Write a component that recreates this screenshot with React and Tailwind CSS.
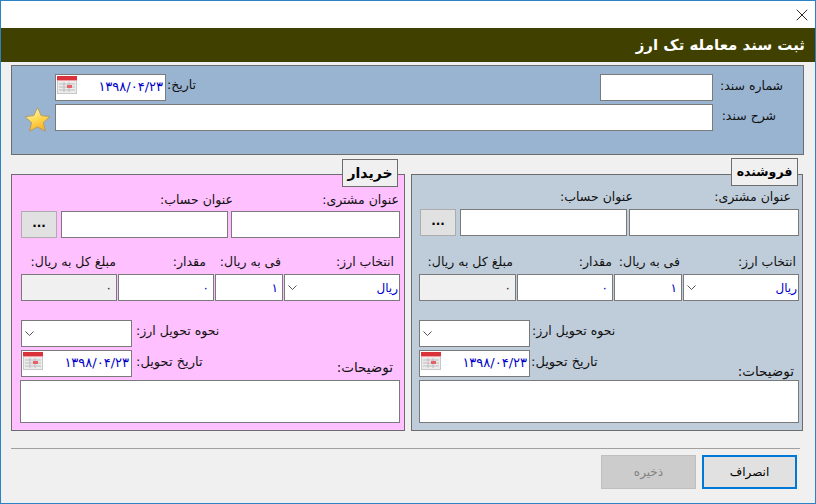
import { X } from 'lucide-react';

const boxClass = 'h-[27px] shrink-0 border border-[#7a7a7a] bg-white';

function Label({ children, className = '' }) {
  return (
    <span dir="rtl" className={`whitespace-nowrap text-[12.5px] leading-[16px] text-[#111] ${className}`}>
      {children}
    </span>
  );
}

function CalendarIcon() {
  return (
    <svg width="20" height="18" viewBox="0 0 20 18" className="shrink-0">
      <rect x="0.5" y="0.5" width="19" height="17" fill="#ececec" stroke="#c8c8c8" />
      <rect x="0" y="0" width="20" height="4" fill="#d9323a" />
      <rect x="0" y="4" width="20" height="1" fill="#f0a0a0" />
      <path d="M2 8h16M2 11h16M2 14h16M7 6v10M12 6v10" stroke="#bdbdbd" strokeWidth="1" fill="none" />
      <rect x="10" y="9" width="5" height="3" fill="#e8606a" />
    </svg>
  );
}

function StarIcon() {
  return (
    <svg width="27" height="27" viewBox="0 0 27 27">
      <defs>
        <linearGradient id="starFill" x1="0.3" y1="0" x2="0.7" y2="1">
          <stop offset="0" stopColor="#fff8c0" />
          <stop offset="0.5" stopColor="#fed84f" />
          <stop offset="1" stopColor="#f7a823" />
        </linearGradient>
      </defs>
      <path
        d="M13.5 1.5 L17.2 9.6 L26 10.6 L19.5 16.6 L21.3 25.3 L13.5 20.9 L5.7 25.3 L7.5 16.6 L1 10.6 L9.8 9.6 Z"
        fill="url(#starFill)"
        stroke="#b39a6a"
        strokeWidth="1"
        strokeLinejoin="round"
      />
    </svg>
  );
}

function DateBox({ width }) {
  return (
    <div className={`${boxClass} ${width} flex items-start justify-between pl-[1px] pr-[2px] pt-[1px]`}>
      <CalendarIcon />
      <span className="pt-[3px] text-[13px] leading-[16px] text-[#0000c8]">۱۳۹۸/۰۴/۲۳</span>
    </div>
  );
}

function Combo({ width, value }) {
  return (
    <div className={`${boxClass} ${width} flex items-center justify-between pl-[3px]`}>
      <svg width="9" height="5" viewBox="0 0 9 5" className="shrink-0">
        <path d="M0.5 0.5 L4.5 4.5 L8.5 0.5" fill="none" stroke="#555" strokeWidth="1" />
      </svg>
      {value && <span className="pr-[1px] text-[12px] text-[#0000c8]">{value}</span>}
    </div>
  );
}

function NumberBox({ width, value, disabled }) {
  return (
    <div
      className={`h-[27px] shrink-0 border border-[#7a7a7a] ${width} flex items-center justify-end pr-[4px] text-[12px] ${
        disabled ? 'bg-[#f0f0f0] text-[#222]' : 'bg-white text-[#0000c8]'
      }`}
    >
      {value}
    </div>
  );
}

function Party({ c }) {
  return (
    <div className={`relative h-[257px] shrink-0 border border-[#6d6d6d] ${c.panel}`}>
      {/* legend sits on top of the border */}
      <div
        className={`absolute flex h-[28px] items-center justify-center border border-[#6d6d6d] bg-[#f0f0f0] font-bold text-black ${c.legend}`}
      >
        <span dir="rtl">{c.title}</span>
      </div>

      {/* customer + account */}
      <div className={`flex ${c.row1Label}`}>
        <div className={`flex justify-end ${c.accLabel}`}>
          <Label>عنوان حساب:</Label>
        </div>
        <div className={`flex justify-end ${c.custLabel}`}>
          <Label>عنوان مشتری:</Label>
        </div>
      </div>
      <div className={`flex ${c.row1}`}>
        <div className="flex h-[27px] w-[36px] shrink-0 items-center justify-center border border-[#adadad] bg-[#e1e1e1] pb-[4px] text-[12px] font-bold text-black">
          ...
        </div>
        <div className={`${boxClass} ml-[4px] ${c.accBox}`} />
        <div className={`${boxClass} ${c.custBox}`} />
      </div>

      {/* currency */}
      <div className={`flex ${c.row2Label}`}>
        <div className={`flex justify-end ${c.totalCell}`}>
          <Label>مبلغ کل به ریال:</Label>
        </div>
        <div className={`flex w-[97px] justify-end ${c.qtyPad}`}>
          <Label>مقدار:</Label>
        </div>
        <div className={`flex w-[69px] justify-end ${c.ratePad}`}>
          <Label>فی به ریال:</Label>
        </div>
        <div className={`flex flex-1 justify-end ${c.currencyPad}`}>
          <Label>انتخاب ارز:</Label>
        </div>
      </div>
      <div className={`mt-[4px] flex gap-[1px] ${c.boxes}`}>
        <NumberBox width={c.totalBox} value="۰" disabled />
        <NumberBox width="w-[96px]" value="۰" />
        <NumberBox width="w-[68px]" value="۱" />
        <Combo width={c.comboBox} value="ریال" />
      </div>

      {/* delivery */}
      <div className={`mt-[19px] flex items-start ${c.boxes}`}>
        <Combo width="w-[111px]" />
        <Label className={`pt-[3px] ${c.deliveryLabel}`}>نحوه تحویل ارز:</Label>
      </div>
      <div className={`mt-[3px] flex h-[27px] items-start ${c.boxes}`}>
        <DateBox width="w-[111px]" />
        <Label className={`pt-[4px] text-[13px] ${c.dateLabel}`}>تاریخ تحویل:</Label>
        <Label className={`ml-auto text-[13.5px] ${c.notesLabel}`}>توضیحات:</Label>
      </div>
      <div className={`${boxClass} mt-[3px] h-[43px] ${c.notes}`} />
    </div>
  );
}

const buyer = {
  title: 'خریدار',
  panel: 'w-[394px] bg-[#ffc0ff]',
  legend: 'left-[330px] top-[-16px] w-[56px] text-[14px]',
  row1Label: 'pl-[9px] pt-[17px]',
  accLabel: 'w-[212px]',
  custLabel: 'w-[166px]',
  row1: 'mt-[3px] pl-[9px]',
  accBox: 'mr-[3px] w-[167px]',
  custBox: 'w-[169px]',
  row2Label: 'mt-[16px] pl-[9px]',
  totalCell: 'w-[97px] pr-[2px]',
  qtyPad: 'pr-[9px]',
  ratePad: 'pr-[3px]',
  currencyPad: 'pr-[10px]',
  boxes: 'pl-[9px]',
  totalBox: 'w-[96px]',
  comboBox: 'w-[116px]',
  deliveryLabel: 'ml-[4px]',
  dateLabel: 'ml-[4px]',
  notesLabel: 'mr-[11px] pt-[9px]',
  notes: 'ml-[8px] w-[380px]',
};

const seller = {
  title: 'فروشنده',
  panel: 'w-[392px] bg-[#bfcddb]',
  legend: 'left-[319px] top-[-17px] w-[67px] text-[12.5px]',
  row1Label: 'pl-[8px] pt-[14px]',
  accLabel: 'w-[213px]',
  custLabel: 'w-[158px]',
  row1: 'mt-[4px] pl-[8px]',
  accBox: 'mr-[2px] w-[167px]',
  custBox: 'w-[170px]',
  row2Label: 'mt-[18px] pl-[7px]',
  totalCell: 'w-[97px] pr-[3px]',
  qtyPad: 'pr-[1px]',
  ratePad: 'pr-[2px]',
  currencyPad: 'pr-[6px]',
  boxes: 'pl-[7px]',
  totalBox: 'w-[97px]',
  comboBox: 'w-[116px]',
  deliveryLabel: 'ml-[2px]',
  dateLabel: 'ml-[1px]',
  notesLabel: 'mr-[8px] pt-[13px]',
  notes: 'ml-[7px] w-[380px]',
};

export default function App() {
  return (
    <div className="flex h-[504px] w-[816px] flex-col overflow-hidden border border-[#2b82c4] bg-[#f0f0f0] font-['DejaVu_Sans',sans-serif]">
      {/* Title bar */}
      <div className="flex h-[27px] shrink-0 items-center justify-end bg-white pr-[3px]">
        <X size={20} strokeWidth={1} className="text-black" />
      </div>
      <div className="flex h-[34px] shrink-0 items-center justify-end bg-[#404000] pr-[10px]">
        <span dir="rtl" className="text-[15px] font-bold text-white">
          ثبت سند معامله تک ارز
        </span>
      </div>

      {/* Document header */}
      <div className="ml-[10px] mt-[3px] flex h-[90px] w-[793px] shrink-0 items-start border border-[#6d6d6d] bg-[#99b4d1]">
        <div className="flex w-[43px] shrink-0 justify-end pr-[4px] pt-[40px]">
          <StarIcon />
        </div>
        <div className="flex w-[658px] shrink-0 flex-col gap-[3px] pt-[8px]">
          <div className="flex">
            <DateBox width="w-[111px]" />
            <Label className="pl-[1px] pt-[3px]">تاریخ:</Label>
            <div className={`${boxClass} ml-auto w-[113px]`} />
          </div>
          <div className={`${boxClass} w-full`} />
        </div>
        <div className="flex flex-col pl-[7px] pt-[12px]">
          <Label>شماره سند:</Label>
          <Label className="mt-[14px] pr-[7px]">شرح سند:</Label>
        </div>
      </div>

      {/* Buyer and seller */}
      <div className="ml-[10px] mt-[19px] flex gap-[6px]">
        <Party c={buyer} />
        <Party c={seller} />
      </div>

      {/* Footer */}
      <div className="ml-[10px] mt-[17px] h-px w-[789px] shrink-0 bg-[#a0a0a0]" />
      <div className="ml-[600px] mt-[6px] flex gap-[6px]">
        <div className="flex h-[34px] w-[95px] items-center justify-center border border-[#bfbfbf] bg-[#cccccc] text-[12px] text-[#838383]">
          <span dir="rtl">ذخیره</span>
        </div>
        <div className="flex h-[34px] w-[95px] items-center justify-center border-2 border-[#0078d7] bg-[#e1e1e1] text-[12px] text-black">
          <span dir="rtl">انصراف</span>
        </div>
      </div>
    </div>
  );
}
